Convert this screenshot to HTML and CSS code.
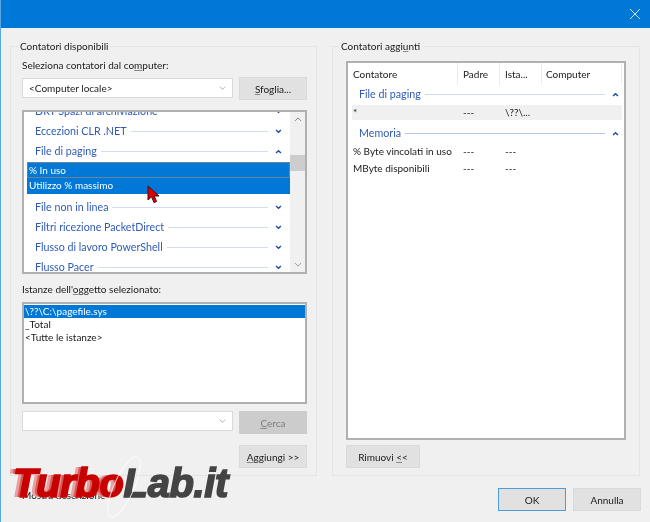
FILE: index.html
```html
<!DOCTYPE html>
<html lang="it">
<head>
<meta charset="utf-8">
<title>Aggiungi contatori</title>
<link rel="stylesheet" href="styles.css">
</head>
<body>
<svg class="defs" width="0" height="0" aria-hidden="true">
  <symbol id="up" viewBox="0 0 10 6"><path d="M1.5 5 5 1.8 8.5 5" fill="none" stroke="#1f4aa0" stroke-width="2"/></symbol>
  <symbol id="down" viewBox="0 0 10 6"><path d="M1.5 1 5 4.2 8.5 1" fill="none" stroke="#1f4aa0" stroke-width="2"/></symbol>
  <symbol id="thin" viewBox="0 0 10 6"><path d="M1 1 5 5 9 1" fill="none" stroke="#8a8a8a" stroke-width="1"/></symbol>
  <symbol id="thinup" viewBox="0 0 10 6"><path d="M1 5 5 1 9 5" fill="none" stroke="#707070" stroke-width="1"/></symbol>
</svg>
<div class="window">
  <header class="titlebar">
    <svg class="close" width="12" height="12" viewBox="0 0 12 12"><path d="M1 1 11 11M11 1 1 11" stroke="#cfe6f8" stroke-width="1"/></svg>
  </header>
  <main class="groups">
    <section class="group left">
      <div class="legend">Contatori disponibili</div>
      <div class="label first">Seleziona contatori dal co<u>m</u>puter:</div>
      <div class="row top">
        <div class="combo"><span>&lt;Computer locale&gt;</span><svg class="arrow"><use href="#thin"/></svg></div>
        <button class="btn"><u>S</u>foglia...</button>
      </div>
      <div class="list counters">
        <div class="scroller">
          <div class="cat clipped"><span>DRT Spazi di archiviazione</span><i class="rule"></i><svg class="chev"><use href="#down"/></svg></div>
          <div class="cat"><span>Eccezioni CLR .NET</span><i class="rule"></i><svg class="chev"><use href="#down"/></svg></div>
          <div class="cat"><span>File di paging</span><i class="rule"></i><svg class="chev"><use href="#up"/></svg></div>
          <div class="item focus">% In uso</div>
          <div class="item">Utilizzo % massimo</div>
          <div class="cat gap"><span>File non in linea</span><i class="rule"></i><svg class="chev"><use href="#down"/></svg></div>
          <div class="cat"><span>Filtri ricezione PacketDirect</span><i class="rule"></i><svg class="chev"><use href="#down"/></svg></div>
          <div class="cat"><span>Flusso di lavoro PowerShell</span><i class="rule"></i><svg class="chev"><use href="#down"/></svg></div>
          <div class="cat"><span>Flusso Pacer</span><i class="rule"></i><svg class="chev"><use href="#down"/></svg></div>
        </div>
        <div class="scrollbar">
          <svg class="sarrow"><use href="#thinup"/></svg>
          <div class="thumb"></div>
          <svg class="sarrow end"><use href="#thin"/></svg>
        </div>
      </div>
      <div class="label second">Istanze dell'<u>o</u>ggetto selezionato:</div>
      <div class="list instances">
        <div class="inst selected">\??\C:\pagefile.sys</div>
        <div class="inst">_Total</div>
        <div class="inst">&lt;Tutte le istanze&gt;</div>
      </div>
      <div class="row search">
        <div class="combo"><span></span><svg class="arrow"><use href="#thin"/></svg></div>
        <button class="btn disabled"><u>C</u>erca</button>
      </div>
      <div class="row add">
        <button class="btn"><u>A</u>ggiungi &gt;&gt;</button>
      </div>
    </section>
    <section class="group right">
      <div class="legend">Contatori aggi<u>u</u>nti</div>
      <div class="list added">
        <div class="cols head"><span>Contatore</span><span>Padre</span><span>Ista...</span><span>Computer</span></div>
        <div class="cat wide"><span>File di paging</span><i class="rule"></i><svg class="chev"><use href="#up"/></svg></div>
        <div class="cols rowa shaded"><span>*</span><span>---</span><span>\??\...</span><span></span></div>
        <div class="cat wide next"><span>Memoria</span><i class="rule strong"></i><svg class="chev"><use href="#up"/></svg></div>
        <div class="cols rowb"><span>% Byte vincolati in uso</span><span>---</span><span>---</span><span></span></div>
        <div class="cols rowb"><span>MByte disponibili</span><span>---</span><span>---</span><span></span></div>
      </div>
      <div class="row remove">
        <button class="btn wider">Rimuovi <u>&lt;</u>&lt;</button>
      </div>
    </section>
  </main>
  <footer class="footer">
    <div class="desc">Mostra descrizione</div>
    <div class="actions">
      <button class="btn default">OK</button>
      <button class="btn">Annulla</button>
    </div>
  </footer>
  <svg class="cursor" width="14" height="19" viewBox="0 0 14 19"><path d="M1 1V15L4.6 11.8 7 17.6 9.6 16.4 7.2 11H12Z" fill="#e00000" stroke="#3a1010" stroke-width="1"/></svg>
  <div class="logo"><span class="turbo">Turbo</span><span class="lab">Lab.it</span></div>
  <svg class="swoosh" width="50" height="70" viewBox="0 0 50 70"><ellipse cx="25" cy="35" rx="10" ry="33" transform="rotate(24 25 35)" fill="none" stroke="#fff" stroke-opacity=".75" stroke-width="1"/></svg>
</div>
</body>
</html>
```
FILE: styles.css
```css
* { box-sizing: border-box; }
html, body { margin: 0; padding: 0; }
body {
  width: 650px;
  height: 522px;
  overflow: hidden;
  background: #f0f0f0;
  font-family: "Lato", "Noto Sans", sans-serif;
  font-size: 10px;
  line-height: 14px;
  color: #1a1a1a;
}
.defs { position: absolute; }
u { text-decoration-color: #8a8a8a; text-underline-offset: 1px; }
.window {
  position: relative;
  width: 650px;
  height: 522px;
  background: #f0f0f0;
  border-left: 1px solid #5aa7e6;
  filter: blur(0.35px);
  overflow: hidden;
}
.titlebar {
  height: 28px;
  background: #0078d7;
  display: flex;
  justify-content: flex-end;
  align-items: center;
  padding-right: 9px;
}
.groups {
  display: flex;
  gap: 15px;
  padding-left: 9px;
  margin-top: 18px;
}
.group {
  height: 430px;
  border: 1px solid #e4e4e4;
}
.group.left { width: 307px; padding: 0 9px 0 11px; }
.group.right { width: 308px; padding: 0 13px; }
.legend {
  width: fit-content;
  margin: -8px 0 0 -4px;
  padding: 0 2px;
  background: #f0f0f0;
  line-height: 14px;
}
.group.right .legend { margin-left: -7px; }
.label.first { margin-top: 5px; }
.label.second { margin-top: 8px; }
.row { display: flex; gap: 6px; align-items: flex-start; }
.row.top { margin-top: 5px; }
.row.search { margin-top: 7px; }
.row.add { margin-top: 11px; justify-content: flex-end; }
.row.remove { margin-top: 5px; }
.combo {
  width: 211px;
  height: 20px;
  margin-top: 1px;
  background: #fff;
  border: 1px solid #dadada;
  display: flex;
  align-items: center;
  justify-content: space-between;
  padding: 0 6px;
}
.row.search .combo { margin-top: 0; }
.arrow { width: 7px; height: 4px; }
.btn {
  width: 68px;
  height: 23px;
  padding: 0;
  flex: none;
  background: #e1e1e1;
  border: 1px solid #dadada;
  font: inherit;
  color: #1a1a1a;
}
.btn.wider { width: 74px; }
.btn.disabled { background: #cccccc; border-color: #cccccc; color: #7d7d7d; }
.btn.default { border: 1px solid #4a9ede; }
.list {
  background: #fff;
  border: 2px solid #b0b0b0;
  width: 285px;
  overflow: hidden;
}
.counters { margin-top: 10px; height: 164px; display: flex; }
.scroller { flex: 1; min-width: 0; overflow: hidden; }
.scrollbar {
  width: 15px;
  background: #f0f0f0;
  display: flex;
  flex-direction: column;
  align-items: center;
}
.sarrow { width: 8px; height: 5px; margin-top: 5px; }
.sarrow.end { margin-top: 91px; }
.thumb { width: 15px; height: 16px; margin-top: 33px; background: #cdcdcd; }
.cat {
  height: 20px;
  display: flex;
  align-items: center;
  padding: 0 6px 0 11px;
  font-size: 10.7px;
  color: #2f5bb7;
}
.cat.clipped { margin-top: -11px; }
.cat.gap { margin-top: 3px; }
.rule { flex: 1; height: 1px; margin-left: 4px; background: #cfdcf3; }
.rule.strong { background: #b4c6ea; }
.chev { width: 7px; height: 5px; margin-left: 7px; margin-right: 2px; flex: none; }
.item {
  height: 16px;
  margin-left: 3px;
  padding-left: 2px;
  background: #0078d7;
  color: #fff;
  line-height: 15px;
}
.item.focus {
  margin-top: 1px;
  border: 1px solid #6e8296;
  padding-left: 1px;
  line-height: 14px;
}
.label.second + .list { margin-top: 6px; }
.instances { height: 102px; padding-top: 1px; }
.inst { height: 13px; line-height: 13px; padding-left: 1px; }
.inst.selected { background: #0078d7; color: #fff; }
.added { margin-top: 8px; width: 280px; height: 379px; padding-top: 0; }
.cols {
  display: grid;
  grid-template-columns: 106px 42px 42px 80px;
  margin-left: 4px;
  width: 270px;
}
.cols span { padding-left: 5px; white-space: nowrap; }
.cols span:first-child { padding-left: 1px; }
.cols span:last-child { padding-left: 4px; }
.head { height: 21px; line-height: 22px; }
.head span { border-right: 1px solid #ececec; }
.cat.wide { padding: 0 3px 0 11px; }
.shaded { background: #f0f0f0; margin-top: 1px; height: 15px; line-height: 15px; }
.cat.next { margin-top: 3px; }
.rowb { height: 17px; line-height: 17px; }
.footer {
  display: flex;
  justify-content: space-between;
  align-items: flex-start;
  margin-top: 12px;
  padding: 0 9px 0 21px;
}
.desc { line-height: 14px; }
.actions { display: flex; gap: 7px; }
.close { display: block; }
.cursor { position: absolute; left: 146px; top: 185px; }
.logo {
  position: absolute;
  left: 12px;
  top: 460px;
  font-family: "Liberation Sans", sans-serif;
  font-weight: 700;
  font-style: italic;
  font-size: 40px;
  line-height: 46px;
  letter-spacing: -0.4px;
  white-space: nowrap;
  -webkit-text-stroke: 1.6px currentColor;
}
.turbo { color: #c80000; text-shadow: -3px 0 #d85a5a, -6px 0 #e9a0a0; }
.lab { color: #444; }
.swoosh { position: absolute; left: 98px; top: 452px; }
```
